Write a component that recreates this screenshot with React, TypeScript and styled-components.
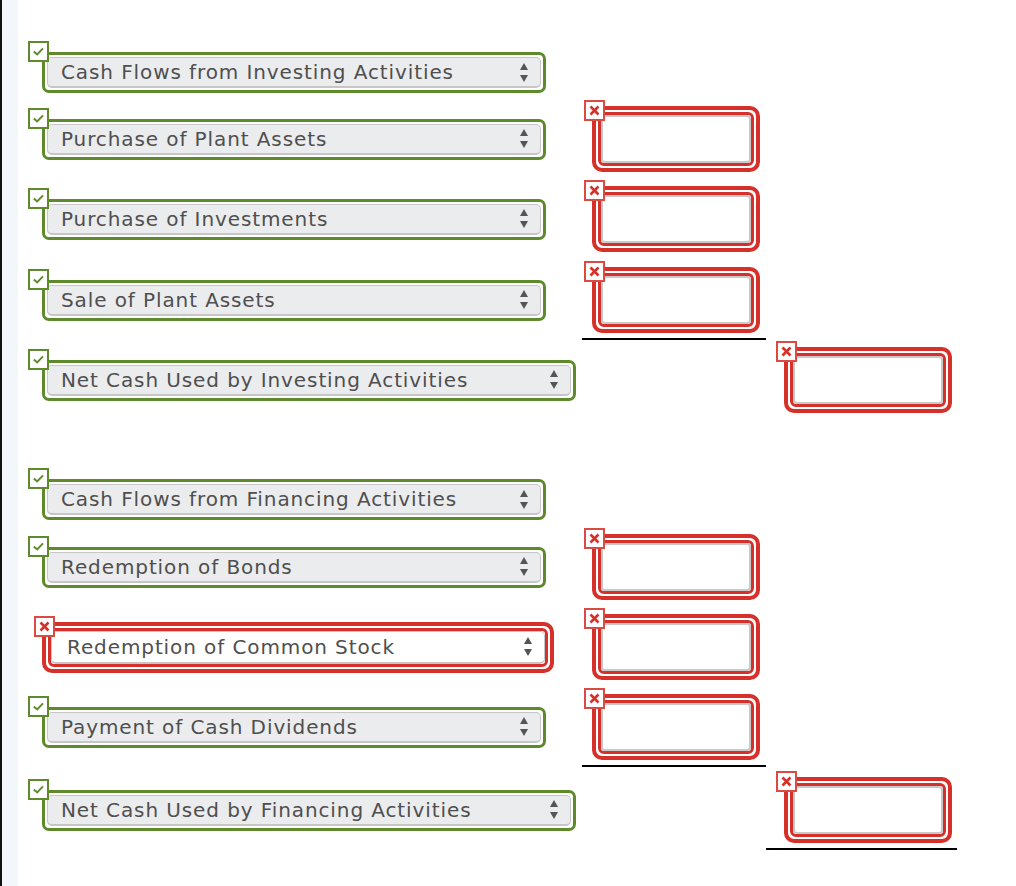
import styled, { createGlobalStyle, css } from 'styled-components'

const GREEN = '#5f8a2c'
const RED = '#d6302a'

const GlobalStyle = createGlobalStyle`
  html, body {
    margin: 0;
    padding: 0;
    background: #ffffff;
  }
  body {
    font-family: "DejaVu Sans", Verdana, sans-serif;
  }
`

const Page = styled.div`
  display: flex;
  min-height: 886px;
`

const EdgeRule = styled.div`
  width: 2px;
  background: #111111;
`

const Gutter = styled.div`
  width: 16px;
  background: #f3f7fb;
`

const Sheet = styled.div`
  flex: 1;
  display: flex;
  flex-direction: column;
`

const Line = styled.div<{ $gap: number }>`
  display: grid;
  grid-template-columns: 564px 184px 191px;
  align-items: start;
  margin-top: ${p => p.$gap}px;
`

const SelectCell = styled.div<{ $tall?: boolean }>`
  height: ${p => (p.$tall ? 66 : 41)}px;
  padding-left: 24px;
  display: flex;
  align-items: center;
`

const AmountCell = styled.div<{ $inset: number; $ruled?: boolean }>`
  padding-left: ${p => p.$inset}px;
  ${p =>
    p.$ruled &&
    css`
      padding-bottom: 5px;
      border-bottom: 2px solid #000000;
    `}
`

const Frame = styled.div<{ $bad?: boolean }>`
  position: relative;
  display: inline-flex;
  background: #ffffff;
  padding: 2px;
  ${p =>
    p.$bad
      ? css`
          border: 4px solid ${RED};
          border-radius: 10px;
        `
      : css`
          border: 3px solid ${GREEN};
          border-radius: 7px;
        `}
`

const Ring = styled.div`
  display: flex;
  border: 3px solid ${RED};
  border-radius: 6px;
`

const Badge = styled.span<{ $bad?: boolean }>`
  position: absolute;
  left: ${p => (p.$bad ? -12 : -17)}px;
  top: ${p => (p.$bad ? -10 : -14)}px;
  z-index: 1;
  width: 21px;
  height: 21px;
  box-sizing: border-box;
  border: 2px solid ${p => (p.$bad ? '#dc4a42' : GREEN)};
  background: #ffffff;
  display: flex;
  align-items: center;
  justify-content: center;
`

const Select = styled.div<{ $w: number; $bad?: boolean }>`
  box-sizing: border-box;
  width: ${p => p.$w}px;
  height: ${p => (p.$bad ? 33 : 31)}px;
  padding: 0 12px 0 ${p => (p.$bad ? 15 : 13)}px;
  display: flex;
  align-items: center;
  background: ${p => (p.$bad ? '#ffffff' : '#ebecee')};
  border: 1px solid #c6c6c6;
  border-bottom-width: 2px;
  border-radius: 5px;
  font-size: 20px;
  letter-spacing: 0.9px;
  color: #4f4f4f;
  white-space: nowrap;
`

const Label = styled.span`
  flex: 1;
`

const Amount = styled.input`
  box-sizing: border-box;
  width: 150px;
  height: 48px;
  border: 2px solid #c9c9c9;
  border-radius: 4px;
  background: #ffffff;
  outline: none;
`

const Check = () => (
  <svg width="17" height="17" viewBox="0 0 17 17">
    <path d="M3.8 8.4 L7.2 11.4 L13 5.4" fill="none" stroke={GREEN} strokeWidth="2" />
  </svg>
)

const Cross = () => (
  <svg width="17" height="17" viewBox="0 0 17 17">
    <path d="M4.5 4.5 L12.5 12.5 M12.5 4.5 L4.5 12.5" fill="none" stroke={RED} strokeWidth="2.6" />
  </svg>
)

const UpDown = () => (
  <svg width="8" height="19" viewBox="0 0 8 19">
    <polygon points="0,7 4,0 8,7" fill="#555555" />
    <polygon points="0,12 8,12 4,19" fill="#555555" />
  </svg>
)

const Dropdown = ({ label, wide, bad }: { label: string; wide?: boolean; bad?: boolean }) => {
  const body = (
    <Select $w={wide ? 524 : 494} $bad={bad}>
      <Label>{label}</Label>
      <UpDown />
    </Select>
  )
  return (
    <Frame $bad={bad}>
      <Badge $bad={bad}>{bad ? <Cross /> : <Check />}</Badge>
      {bad ? <Ring>{body}</Ring> : body}
    </Frame>
  )
}

const WrongAmount = () => (
  <Frame $bad>
    <Badge $bad>
      <Cross />
    </Badge>
    <Ring>
      <Amount type="text" />
    </Ring>
  </Frame>
)

type Entry = {
  label: string
  gap: number
  wide?: boolean
  wrong?: boolean
  mid?: boolean
  total?: boolean
  rule?: 'mid' | 'total'
}

const entries: Entry[] = [
  { label: 'Cash Flows from Investing Activities', gap: 52 },
  { label: 'Purchase of Plant Assets', mid: true, gap: 13 },
  { label: 'Purchase of Investments', mid: true, gap: 14 },
  { label: 'Sale of Plant Assets', mid: true, rule: 'mid', gap: 15 },
  { label: 'Net Cash Used by Investing Activities', wide: true, total: true, gap: 7 },
  { label: 'Cash Flows from Financing Activities', gap: 66 },
  { label: 'Redemption of Bonds', mid: true, gap: 14 },
  { label: 'Redemption of Common Stock', wrong: true, mid: true, gap: 14 },
  { label: 'Payment of Cash Dividends', mid: true, rule: 'mid', gap: 14 },
  { label: 'Net Cash Used by Financing Activities', wide: true, total: true, rule: 'total', gap: 10 },
]

export default function App() {
  return (
    <>
      <GlobalStyle />
      <Page>
        <EdgeRule />
        <Gutter />
        <Sheet>
          {entries.map(e => (
            <Line key={e.label} $gap={e.gap}>
              <SelectCell $tall={e.mid || e.total}>
                <Dropdown label={e.label} wide={e.wide} bad={e.wrong} />
              </SelectCell>
              <AmountCell $inset={10} $ruled={e.rule === 'mid'}>
                {e.mid && <WrongAmount />}
              </AmountCell>
              <AmountCell $inset={18} $ruled={e.rule === 'total'}>
                {e.total && <WrongAmount />}
              </AmountCell>
            </Line>
          ))}
        </Sheet>
      </Page>
    </>
  )
}
